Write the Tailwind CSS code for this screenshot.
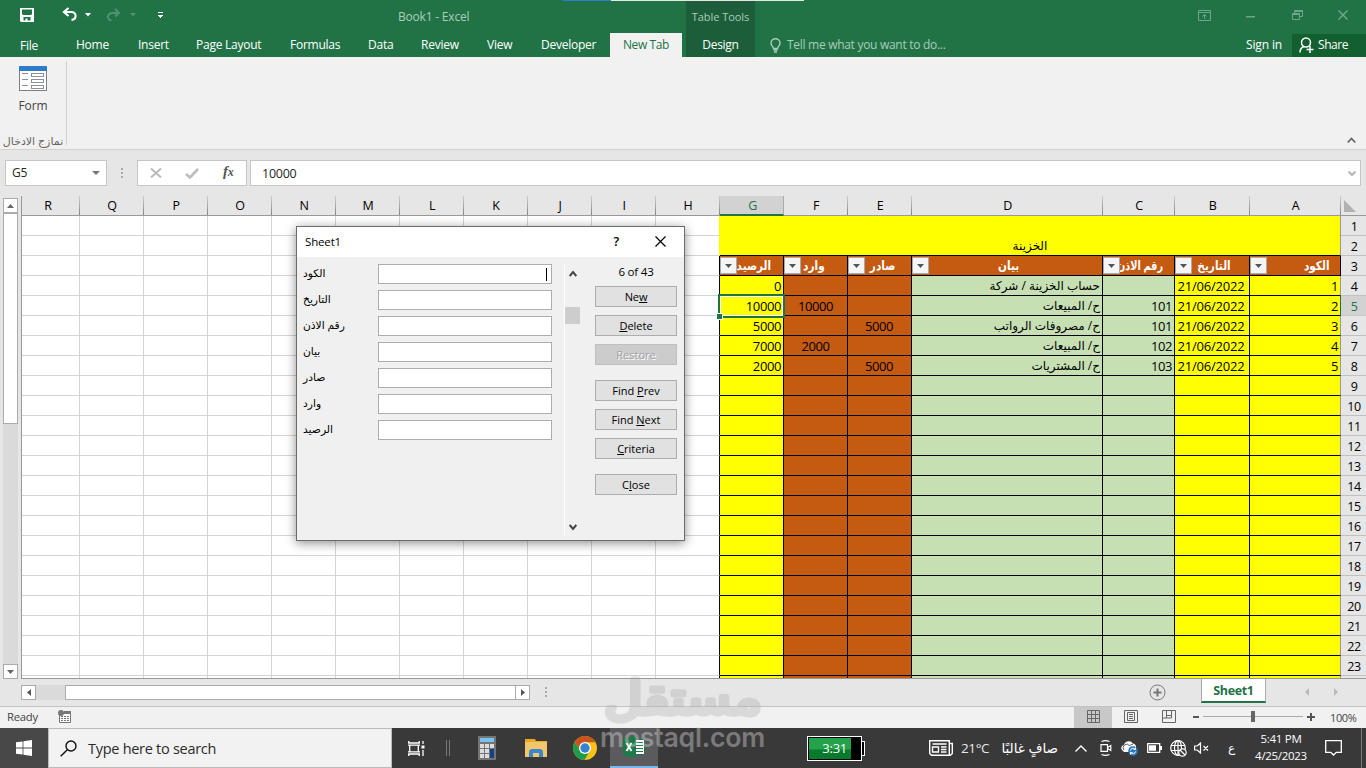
<!DOCTYPE html>
<html lang="en">
<head>
<meta charset="utf-8">
<title>Book1 - Excel</title>
<script src="https://cdn.jsdelivr.net/npm/@tailwindcss/browser@4"></script>
</head>
<body class="relative flex h-[768px] w-[1366px] flex-col overflow-hidden bg-[#e6e6e6] font-['Open_Sans','DejaVu_Sans',sans-serif] text-[12px] leading-none tracking-[-0.25px] text-[#262626]">

<!-- Title bar and tabs -->
<header class="relative h-[57px] shrink-0 bg-[#217346] text-white">
  <div class="absolute left-[563px] top-0 flex h-px w-[241px] bg-[#e6e6e6]"><i class="h-px w-[48px] bg-[#2b7cd3]"></i></div>
  <div class="flex h-[33px] items-center">
    <svg class="ml-5 h-[14px] w-[14px] -mt-[3px]" viewBox="0 0 14 14"><path fill="#fff" fill-rule="evenodd" d="M0 0H14V14H1L0 13ZM2 1.500V6L3 7H11L12 6V1.500ZM3.500 9V12.500H5.500V10.500H7.500V12.500H10.500V9Z"/></svg>
    <svg class="-mt-1 ml-7 h-[15px] w-[17px]" viewBox="0 0 17 15" fill="none" stroke="#fff" stroke-width="2.200"><path d="M6.500 1 2 5l4.500 4M2.500 5H9c6 0 6 7.500 .5 7.800"/></svg>
    <svg class="-mt-1 ml-[6px] h-[4px] w-[6px]" viewBox="0 0 6 4"><path fill="#fff" d="M0 0h6L3 3.500z"/></svg>
    <svg class="-mt-1 ml-[15px] h-[14px] w-[16px]" viewBox="0 0 16 14" fill="none" stroke="#4f9370" stroke-width="2"><path d="M9 1l4 4-4 3.500M12.500 5H7C.5 5 .5 12 5.500 12.300"/></svg>
    <svg class="-mt-1 ml-[8px] h-[4px] w-[6px]" viewBox="0 0 6 4"><path fill="#4f9370" d="M0 0h6L3 3.500z"/></svg>
    <svg class="-mt-[3px] ml-[21px] h-[7px] w-[7px]" viewBox="0 0 7 7" shape-rendering="crispEdges"><path fill="#fff" d="M1 0h5v1H1zM1 3h5v1H5v1H4v1H3V5H2V4H1z"/></svg>
    <span class="ml-[234px] pt-px text-[#a9cdb9] tracking-[-0.2px]">Book1 - Excel</span>
    <div class="ml-auto flex items-center text-[#6fa688]">
      <svg class="-mt-[3px] h-[11px] w-[13px]" viewBox="0 0 13 11" fill="none" stroke="currentColor"><path d="M.5.5h12v10H.5zM1 2.500h11M6.500 9V4.500M4.500 6.500l2-2 2 2"/></svg>
      <svg class="ml-[35px] h-[3px] w-[9px]" viewBox="0 0 9 3"><path d="M0 1h9v1.500H0z" fill="currentColor"/></svg>
      <svg class="-mt-[3px] ml-[37px] h-[10px] w-[11px]" viewBox="0 0 11 10" fill="none" stroke="currentColor"><path d="M.5 3.500h7v6h-7zM.5 4.500h7M2.500 3V.5h8v6H8M2.500 1.500h8"/></svg>
      <svg class="-mt-[3px] ml-[35px] mr-[18px] h-[10px] w-[10px]" viewBox="0 0 10 10" stroke="currentColor" stroke-width="1.500"><path d="M.5.5l9 9M9.500.5l-9 9"/></svg>
    </div>
  </div>
  <div class="absolute left-[686px] top-px flex h-[56px] w-[69px] flex-col items-center whitespace-nowrap bg-[#1b5e39]">
    <span class="mt-[10px] text-[11px] tracking-[-0.05px] text-[#a9cdb9]">Table Tools</span>
    <span class="mt-[17px] tracking-[-0.3px]">Design</span>
  </div>
  <nav class="flex h-[24px] items-center">
    <span class="w-[56px] pl-5 pt-px">File</span>
    <span class="ml-5 w-[62px]">Home</span><span class="w-[58px]">Insert</span><span class="w-[94px]">Page Layout</span><span class="w-[78px]">Formulas</span><span class="w-[53px]">Data</span><span class="w-[66px]">Review</span><span class="w-[54px]">View</span><span class="w-[69px]">Developer</span>
    <span class="flex h-[24px] w-[72px] items-center justify-center bg-[#f1f1f1] text-[#217346] tracking-[-0.4px]">New Tab</span>
    <svg class="ml-[88px] h-[15px] w-[11px]" viewBox="0 0 11 15" fill="none" stroke="#a9cdb9" stroke-width="1.400"><path d="M3.500 10.500c0-2-2.500-2.500-2.500-5.500a4.500 4.300 0 0 1 9 0c0 3-2.500 3.500-2.500 5.500zM3.500 12h4M4 14h3"/></svg>
    <span class="ml-[6px] tracking-[-0.29px] text-[#a9cdb9]">Tell me what you want to do...</span>
    <span class="ml-auto mr-[10px] tracking-[-0.15px]">Sign in</span>
    <span class="flex h-[23px] w-[74px] items-center bg-[#12602f] tracking-[-0.45px]">
      <svg class="ml-[7px] mr-1 h-[16px] w-[15px]" viewBox="0 0 15 16" fill="none" stroke="#fff" stroke-width="1.500"><circle cx="7" cy="5.500" r="4.500"/><path d="M1 15.500c0-4 2-5.500 4.500-6M11 9v7M7.500 12.500h7"/></svg>Share</span>
  </nav>
</header>

<!-- Ribbon -->
<section class="flex h-[93px] shrink-0 border-b border-[#d2d2d2] bg-[#f1f1f1]">
  <div class="mt-1 flex h-[84px] w-[67px] flex-col items-center border-r border-[#d2d2d2]">
    <svg class="mt-[5px] h-[25px] w-[28px] shrink-0" viewBox="0 0 28 25" shape-rendering="crispEdges"><path fill="#fff" stroke="#7f7f7f" d="M.5.5h27v24H.5z"/><path fill="#2e7bcb" d="M0 0h28v5H0z"/><path stroke="#8a8f98" fill="none" d="M3 7.500h6M3 13.500h6M3 19.500h6M12.500 7.500h12v3h-12zM12.500 13.500h12v3h-12zM12.500 19.500h12v3h-12z"/></svg>
    <span class="mt-[9px] text-[12px] tracking-[-0.1px] text-[#444]">Form</span>
    <span dir="rtl" class="mt-[23px] whitespace-nowrap text-[11px] tracking-normal text-[#666]">نمازج الادخال</span>
  </div>
  <svg class="ml-auto mr-[10px] mt-[80px] h-[7px] w-[9px]" viewBox="0 0 9 7" fill="none" stroke="#666" stroke-width="1.800"><path d="M.7 5.500l3.800-4 3.800 4"/></svg>
</section>

<!-- Formula bar -->
<section class="flex h-[46px] shrink-0 pl-[5px] pt-[10px] text-[12px]">
  <div class="flex h-[26px] w-[102px] items-center justify-between border border-[#c6c6c6] bg-white pl-[6px] pr-[6px]">G5<svg class="-mt-px h-[4px] w-[8px]" viewBox="0 0 8 4"><path fill="#777" d="M0 0h8L4 4z"/></svg></div>
  <div class="ml-[14px] mt-2 flex flex-col gap-[2px]"><i class="size-[2px] bg-[#aaa]"></i><i class="size-[2px] bg-[#aaa]"></i><i class="size-[2px] bg-[#aaa]"></i></div>
  <div class="ml-[14px] flex h-[26px] w-[110px] items-center border border-[#c6c6c6] bg-white">
    <svg class="ml-[12px] h-[10px] w-[12px]" viewBox="0 0 12 10" stroke="#bcbcbc" stroke-width="2"><path d="M1 .5l10 9M11 .5l-10 9"/></svg>
    <svg class="ml-[23px] h-[11px] w-[14px]" viewBox="0 0 14 11" fill="none" stroke="#bcbcbc" stroke-width="2.600"><path d="M1 6l4 3.500L13 1"/></svg>
    <span class="-mt-1 ml-[24px] font-['Liberation_Serif',serif] text-[15px] font-bold italic text-[#555]">f<span class="text-[12px]">x</span></span>
  </div>
  <div class="ml-[3px] flex h-[26px] w-[1111px] items-center justify-between border border-[#c6c6c6] bg-white pl-[11px] pr-[4px] pt-[2px] text-[12.500px]">10000<svg class="-mt-[2px] h-[5px] w-[8px]" viewBox="0 0 8 5" fill="none" stroke="#b5b5b5" stroke-width="2"><path d="M.5.5L4 4 7.500.5"/></svg></div>
</section>

<!-- Worksheet -->
<section class="flex h-[483px] shrink-0">
  <div class="flex w-[22px] flex-col border-r border-[#999] pl-[3px] pt-[2px]">
    <div class="flex h-[15px] w-[15px] items-center justify-center border border-[#ababab] bg-white"><svg class="h-1 w-[7px]" viewBox="0 0 7 4"><path fill="#666" d="M0 4h7L3.500 0z"/></svg></div>
    <div class="h-[211px] w-[15px] border border-[#ababab] bg-white"></div>
    <div class="h-[240px] w-[15px] bg-[#dadada]"></div>
    <div class="flex h-[15px] w-[15px] items-center justify-center border border-[#ababab] bg-white"><svg class="h-1 w-[7px]" viewBox="0 0 7 4"><path fill="#666" d="M0 0h7L3.500 4z"/></svg></div>
  </div>
  <div id="sheet" class="relative grid h-[483px] w-[1344px] auto-rows-[20px] grid-cols-[58px_repeat(13,64px)_191px_72px_75px_91px_25px] overflow-hidden border-b border-[#999] bg-white text-[13px] tracking-[-0.4px]"></div>
</section>

<!-- Sheet tabs and horizontal scroll -->
<section class="flex h-[27px] shrink-0 pl-[21px]">
  <div class="mt-[6px] flex h-[15px] w-[509px] bg-[#dadada]">
    <div class="flex w-[15px] items-center justify-center border border-[#ababab] bg-white"><svg class="h-[7px] w-1" viewBox="0 0 4 7"><path fill="#555" d="M4 0v7L0 3.500z"/></svg></div>
    <div class="ml-[29px] w-[451px] border border-[#ababab] bg-white"></div>
    <div class="flex w-[14px] items-center justify-center border border-l-0 border-[#ababab] bg-white"><svg class="h-[7px] w-1" viewBox="0 0 4 7"><path fill="#555" d="M0 0v7L4 3.500z"/></svg></div>
  </div>
  <div class="ml-[15px] mt-2 flex flex-col gap-[2px]"><i class="size-[2px] bg-[#aaa]"></i><i class="size-[2px] bg-[#aaa]"></i><i class="size-[2px] bg-[#aaa]"></i></div>
  <svg class="ml-auto mr-[35px] mt-[5px] h-[17px] w-[17px]" viewBox="0 0 17 17" fill="none" stroke="#777"><circle cx="8.500" cy="8.500" r="7.500"/><path stroke-width="2" d="M4.500 8.500h8M8.500 4.500v8"/></svg>
  <div class="-mt-px flex h-[25px] w-[65px] items-center justify-center border-x border-b-2 border-x-[#ababab] border-b-[#217346] bg-white pt-[4px] text-[12.500px] font-bold text-[#217346] tracking-[-0.35px]">Sheet1</div>
  <svg class="ml-[39px] mt-[9px] h-2 w-1" viewBox="0 0 4 8"><path fill="#bbb" d="M4 0v8L0 4z"/></svg>
  <svg class="ml-[25px] mr-[28px] mt-[9px] h-2 w-1" viewBox="0 0 4 8"><path fill="#bbb" d="M0 0v8L4 4z"/></svg>
</section>

<!-- Status bar -->
<section class="flex h-[22px] shrink-0 items-center border-t border-[#c3c3c3] bg-[#f1f1f1] pl-[7px] text-[11.300px] text-[#444]">
  <span class="w-[51px] -mt-px">Ready</span>
  <svg class="-mt-[2px] h-[13px] w-[13px]" viewBox="0 0 13 13"><path fill="#fff" stroke="#777" d="M2 2.500h10.500v10H1.500V3"/><path fill="#777" d="M6 1h7v3H6z"/><circle cx="3" cy="3" r="3" fill="#777"/><path stroke="#777" stroke-dasharray="2 1" d="M3 6.500h8M3 8.500h8M3 10.500h8"/></svg>
  <div class="ml-auto flex h-full w-[38px] items-center justify-center bg-[#c8c8c8]"><svg class="-mt-[2px] h-[13px] w-[13px]" viewBox="0 0 13 13" fill="none" stroke="#666"><path d="M.5.5h12v12H.5zM.5 4.500h12M.5 8.500h12M4.500.5v12M8.500.5v12"/></svg></div>
  <svg class="-mt-[2px] ml-[12px] h-[13px] w-[14px]" viewBox="0 0 14 13" fill="none" stroke="#666"><path d="M.5.5h13v12H.5zM3.500 2.500h7v8h-7zM5 4.500h4M5 6.500h4M5 8.500h4"/></svg>
  <svg class="-mt-[2px] ml-[24px] h-[13px] w-[14px]" viewBox="0 0 14 13" fill="none" stroke="#666"><path d="M.5.5h13v12H.5zM4.500.5v7.500h5V.5M4.500 8H.5M9.500.5v5h-5"/></svg>
  <i class="-mt-px ml-[17px] h-[2px] w-[6px] bg-[#555]"></i>
  <div class="-mt-[2px] ml-1 flex h-px w-[100px] items-center bg-[#aaa]"><i class="ml-[48px] h-[11px] w-1 shrink-0 bg-[#666]"></i></div>
  <svg class="-mt-px ml-1 h-2 w-2" viewBox="0 0 8 8"><path stroke="#555" stroke-width="2" d="M0 4h8M4 0v8"/></svg>
  <span class="-mt-px ml-[15px] w-[36px] whitespace-nowrap text-[11px] tracking-[-0.4px]">100%</span>
</section>

<!-- Taskbar -->
<footer class="flex h-[40px] shrink-0 items-center bg-[#393939] text-white">
  <div class="flex h-full w-[48px] items-center justify-center bg-[#484848]"><svg class="h-[16px] w-[16px]" viewBox="0 0 16 16" fill="#fff"><path d="M0 2.300L6.600 1.400v6.200H0zM7.400 1.200L16 0v7.600H7.400zM0 8.400h6.600v6.200L0 13.700zM7.400 8.400H16V16l-8.600-1.200z"/></svg></div>
  <div class="flex h-full w-[344px] items-center border border-[#bbb] bg-[#f2f2f2] pt-[2px] text-[14.500px] tracking-[-0.28px] text-[#2b2b2b]">
    <svg class="-mt-[2px] ml-[11px] mr-[11px] h-[17px] w-[17px]" viewBox="0 0 17 17" fill="none" stroke="#111" stroke-width="1.400"><circle cx="11" cy="6" r="5"/><path d="M7.300 9.700L.7 16.300"/></svg>Type here to search
  </div>
  <svg class="ml-[16px] h-[15px] w-[17px]" viewBox="0 0 17 15" fill="none" stroke="#fff" stroke-width="1.300"><path d="M.7 0v2h10.600V0M.7 15v-2h10.600v2M1.700 4.200h8.600v6.600H1.700zM0 4.200h12M0 10.800h12M15 0v3M15 9v6"/><path fill="#fff" stroke="none" d="M13.500 4.500h3v3h-3z"/></svg>
  <div class="ml-[21px] flex gap-[2px]"><i class="h-4 w-px bg-[#777]"></i><i class="h-4 w-px bg-[#777]"></i></div>
  <svg class="ml-[28px] h-[24px] w-[18px]" viewBox="0 0 18 24"><path fill="#747474" d="M0 0h18v24H0z"/><path fill="#76c3f0" d="M2 2h14v4H2z"/><path fill="#ddd" d="M2 8h4v4H2zM7 8h4v4H7zM12 8h4v4h-4zM2 13h4v4H2zM7 13h4v4H7zM2 18h4v4H2zM7 18h4v4H7z"/><path fill="#12418b" d="M12 13h4v9h-4z"/></svg>
  <svg class="ml-[29px] h-[18px] w-[22px]" viewBox="0 0 22 18"><path fill="#eda91c" d="M0 0h10l1 2h11v4H0z"/><path fill="#f1c66d" d="M0 3h22v15H0z"/><path fill="#3b86cf" d="M4 18v-6l2-2h10l2 2v6h-4v-4H8v4z"/></svg>
  <svg class="ml-[26px] h-[24px] w-[24px]" viewBox="0 0 24 24"><circle cx="12" cy="12" r="12" fill="#fbc116"/><path fill="#c9531c" d="M1.600 6A12 12 0 0 1 22.400 6.200H12L7 14.500z"/><path fill="#1f9c4b" d="M1.600 6A12 12 0 0 0 11.500 24l5-8.800L7 14.500z"/><circle cx="12" cy="12" r="6" fill="#fff"/><circle cx="12" cy="12" r="4.700" fill="#3683d3"/></svg>
  <div class="ml-[13px] flex h-full w-[48px] items-center justify-center border-b-2 border-[#76b9ed] bg-[#5b5b5e]">
    <svg class="h-[22px] w-[22px]" viewBox="0 0 22 22"><path fill="#fff" stroke="#1e7a48" d="M11 3.500h10.500v15H11z"/><path stroke="#1e7a48" d="M12 6.500h8M12 9.500h8M12 12.500h8M12 15.500h8"/><path fill="#1e7a48" d="M0 2.500L13 0v22L0 19.500z"/><path stroke="#fff" stroke-width="2" d="M3.500 7l5 8M8.500 7l-5 8"/></svg>
  </div>
  <div class="ml-[149px] flex items-center">
    <div class="flex h-[25px] w-[55px] border border-white bg-black p-px"><span class="flex h-full w-[42px] items-center justify-end bg-linear-to-b from-[#25a24c] from-50% to-[#087a2b] to-60% pr-1 text-[13px]">3:31</span></div>
    <i class="h-[15px] w-[3px] border border-l-0 border-white bg-black"></i>
  </div>
  <svg class="ml-[64px] h-[16px] w-[24px]" viewBox="0 0 24 16" fill="none" stroke="#fff" stroke-width="1.400"><path d="M.7.7h19.600v14.600H2.500L.7 13.500zM20.300 3.500h3v10l-2 1.800h-3M3.500 4h14M3.500 7h6v5h-6zM12 7h5.500M12 9.500h5.500M12 12h5.500"/></svg>
  <span class="ml-[8px] w-[29px] pt-[2px] text-[13.500px] tracking-[-0.4px] text-[#e8e8e8]">21°C</span>
  <span dir="rtl" class="ml-[9px] w-[59px] whitespace-nowrap pt-px text-[13.500px] tracking-normal">صافٍ غالبًا</span>
  <svg class="ml-[17px] h-[7px] w-[12px]" viewBox="0 0 12 7" fill="none" stroke="#fff" stroke-width="1.400"><path d="M.5 6.500L6 1l5.500 5.500"/></svg>
  <svg class="ml-[13px] h-[16px] w-[12px]" viewBox="0 0 12 16" fill="none" stroke="#fff" stroke-width="1.200"><path d="M1 4.600h6.500v6.800H1zM8 7.200l2.800-1.700v5L8 8.800M1.500 1.500q4-1.600 8 0M1.500 14.500q4 1.600 8 0"/></svg>
  <svg class="ml-[9px] h-[15px] w-[17px]" viewBox="0 0 17 15"><path fill="#fff" d="M1 9a3 3 0 0 1 2-5 5 5 0 0 1 9-1.500A4 4 0 0 1 15 7L9 11H3z"/><path fill="none" stroke="#393939" stroke-width=".8" d="M3 9a3.500 3.500 0 0 1 5.500-4.500L12 3"/><circle cx="12" cy="10" r="4.800" fill="#2a78bd"/><path fill="none" stroke="#fff" d="M9.500 9.500a2.500 2.500 0 0 1 4.500-1.200M14.500 10.500A2.500 2.500 0 0 1 10 11.700M14.500 6.500v2H12.500M9.500 13.500v-2H11.500"/></svg>
  <svg class="ml-[9px] h-[10px] w-[15px]" viewBox="0 0 15 10"><path fill="none" stroke="#fff" stroke-width="1.300" d="M.7.7h12v8.600h-12z"/><path fill="#fff" d="M2 2.300h7v5.400H2zM13 3h2v4h-2z"/></svg>
  <svg class="ml-[8px] h-[17px] w-[17px]" viewBox="0 0 17 17" fill="none" stroke="#fff" stroke-width="1.200"><circle cx="8" cy="8" r="7.300"/><ellipse cx="8" cy="8" rx="3.500" ry="7.300"/><path d="M1 5.500h14M1 10.500h9M8 .7V15"/><circle cx="12.500" cy="12.500" r="3.700" fill="#393939"/><path d="M10 10l5 5"/></svg>
  <svg class="ml-[7px] h-[12px] w-[15px]" viewBox="0 0 15 12" fill="none" stroke="#fff" stroke-width="1.200"><path d="M.6 4h2.600l3.300-3v10L3.200 8H.6zM9.500 4l4.500 4.500M14 4L9.500 8.500"/></svg>
  <span class="ml-[19px] w-2 text-[12px]">ع</span>
  <div class="ml-[16px] flex w-[58px] flex-col items-center gap-[6px] whitespace-nowrap pb-[2px] text-[11.500px]"><span class="tracking-[-0.25px]">5:41 PM</span><span class="tracking-[-0.3px]">4/25/2023</span></div>
  <svg class="ml-auto mr-[19px] h-[16px] w-[17px]" viewBox="0 0 17 16" fill="none" stroke="#fff" stroke-width="1.300"><path d="M.7.7h15.600v11.600h-5L8.500 15l-2.800-2.700h-5z"/></svg>
  <i class="mr-1 h-full w-px bg-[#777]"></i>
</footer>

<!-- Data form dialog -->
<div class="absolute left-[296px] top-[226px] flex h-[315px] w-[389px] flex-col border border-[#6b6b6b] bg-[#f0f0f0] text-[11px] tracking-[0] text-black shadow-[0_2px_10px_rgba(0,0,0,0.45)]">
  <div class="flex h-[30px] shrink-0 items-center bg-white pl-2 text-[11.500px] tracking-[-0.15px]">Sheet1
    <span class="ml-auto mr-[36px] text-[12.500px] font-semibold">?</span>
    <svg class="-mt-[2px] mr-[18px] h-[11px] w-[11px]" viewBox="0 0 11 11" stroke="#000" stroke-width="1.200"><path d="M.5.5l10 10M10.500.5l-10 10"/></svg>
  </div>
  <div class="flex grow">
    <div id="fields" class="flex w-[262px] flex-col gap-[6px] pl-[6px] pt-[7px]"></div>
    <div class="ml-[5px] mt-[8px] flex h-[270px] w-[17px] flex-col items-center border-l border-white pr-px">
      <svg class="mt-[5px] h-[7px] w-[8px]" viewBox="0 0 8 7" fill="none" stroke="#444" stroke-width="2"><path d="M.7 6L4 2l3.300 4"/></svg>
      <i class="mt-[30px] h-[17px] w-[15px] bg-[#cdcdcd]"></i>
      <svg class="mb-[4px] mt-auto h-[7px] w-[8px]" viewBox="0 0 8 7" fill="none" stroke="#444" stroke-width="2"><path d="M.7 1L4 5l3.300-4"/></svg>
    </div>
    <div class="ml-[14px] flex w-[82px] flex-col items-stretch gap-2 pt-[9px]">
      <span class="mb-px h-[11px] text-center text-[11.500px] tracking-[-0.2px]">6 of 43</span>
      <button class="h-[21px] border border-[#adadad] bg-[#e1e1e1] tracking-[-0.1px]">Ne<u>w</u></button>
      <button class="h-[21px] border border-[#adadad] bg-[#e1e1e1]"><u>D</u>elete</button>
      <button class="h-[21px] border border-[#bfbfbf] bg-[#cccccc] text-[#a3a3a3] [text-shadow:1px_1px_0_#fff]">Restore</button>
      <button class="mt-[7px] h-[21px] border border-[#adadad] bg-[#e1e1e1]">Find <u>P</u>rev</button>
      <button class="h-[21px] border border-[#adadad] bg-[#e1e1e1]">Find <u>N</u>ext</button>
      <button class="h-[21px] border border-[#adadad] bg-[#e1e1e1]"><u>C</u>riteria</button>
      <button class="mt-[7px] h-[21px] border border-[#adadad] bg-[#e1e1e1]">C<u>l</u>ose</button>
    </div>
  </div>
</div>

<!-- Watermark -->
<svg class="absolute left-[586px] top-[664px] h-[104px] w-[195px]" viewBox="-10 0 195 104">
  <text x="166" y="50" direction="rtl" font-family="DejaVu Sans" font-size="46" textLength="158" lengthAdjust="spacingAndGlyphs" fill="#a8a8a8" stroke="#a8a8a8" stroke-width="5" stroke-linejoin="round" opacity=".32">مستقل</text>
  <text x="4" y="83" font-family="Inter" font-weight="600" font-size="27" textLength="165" lengthAdjust="spacingAndGlyphs" fill="#d5d5d5" opacity=".42">mostaql.com</text>
</svg>

<script>
const sheet = document.getElementById('sheet');
const add = (cls, html = '') => {
  const d = document.createElement('div');
  d.className = cls;
  d.innerHTML = html;
  sheet.appendChild(d);
};

// Column headings
for (const c of 'RQPONMLKJIHGFEDCBA') {
  if (c === 'G') {
    add('flex items-center justify-center border-r border-b-2 border-r-[#ababab] border-b-[#217346] bg-[#d2d2d2] pl-[2px] pt-[2px] text-[#217346] text-[12.500px]', c);
  } else {
    add('relative flex items-center justify-center border-b border-[#999] bg-[#e6e6e6] pt-[2px] text-[12.500px] text-black after:absolute after:right-0 after:top-0 after:h-[19px] after:w-px after:bg-linear-to-b after:from-[#ccc] after:to-[#888]' + (c === 'R' ? ' pr-[6px]' : ''), c);
  }
}
add('border-b border-[#999] bg-[#e6e6e6] pl-[3px] pt-[4px]', '<svg class="h-[12px] w-[12px]" viewBox="0 0 12 12"><path fill="#b1b1b1" d="M0 0v12h12z"/></svg>');

const titles = { G: 'الرصيد', F: 'وارد', E: 'صادر', D: 'بيان', C: 'رقم الاذن', B: 'التاريخ', A: 'الكود' };
const data = {
  4: { G: '0', D: 'حساب الخزينة / شركة', B: '21/06/2022', A: '1' },
  5: { G: '10000', F: '10000', D: 'ح/ المبيعات', C: '101', B: '21/06/2022', A: '2' },
  6: { G: '5000', E: '5000', D: 'ح/ مصروفات الرواتب', C: '101', B: '21/06/2022', A: '3' },
  7: { G: '7000', F: '2000', D: 'ح/ المبيعات', C: '102', B: '21/06/2022', A: '4' },
  8: { G: '2000', E: '5000', D: 'ح/ المشتريات', C: '103', B: '21/06/2022', A: '5' }
};
const style = {
  G: 'flex items-center justify-end border-r border-b border-black bg-[#ffff00] pr-[2px] pt-[2px] text-black',
  F: 'flex items-center justify-center border-r border-b border-black bg-[#c55a11] pt-[2px] text-black',
  E: 'flex items-center justify-center border-r border-b border-black bg-[#c55a11] pt-[2px] pr-px text-black',
  D: 'flex items-center justify-end border-r border-b border-black bg-[#c6e0b4] pr-[2px] pt-px text-[12px] tracking-normal text-black',
  C: 'flex items-center justify-end border-r border-b border-black bg-[#c6e0b4] pr-[2px] pt-[2px] text-black',
  B: 'flex items-center justify-center border-r border-b border-black bg-[#ffff00] pt-[2px] pr-[2px] text-black tracking-[-0.22px]',
  A: 'flex items-center justify-end border-r border-b border-b-black border-r-[#999] bg-[#ffff00] pr-[2px] pt-[2px] text-black'
};
const headPos = {
  G: 'pr-[12px] justify-end', F: 'pr-[22px] justify-end', E: 'pr-[16px] justify-end', D: 'justify-center',
  C: 'pr-[11px] justify-end', B: 'pr-[18px] justify-end', A: 'pr-[11px] justify-end'
};
for (let r = 1; r <= 24; r++) {
  for (const c of 'RQPONMLKJI') add('border-r border-b border-[#d4d4d4] bg-white');
  add(r < 3
    ? 'border-r border-b border-b-[#d4d4d4] border-r-[#ffff00] bg-white'
    : 'border-r border-b border-b-[#d4d4d4] border-r-black bg-white');
  if (r === 1) {
    add('col-span-7 row-span-2 flex items-end justify-center border-b border-r border-b-black border-r-[#999] bg-[#ffff00] pb-[3px] text-[12px] tracking-normal text-black', 'الخزينة');
  } else if (r === 3) {
    for (const c of 'GFEDCBA') {
      add('relative flex items-center overflow-hidden whitespace-nowrap border-r border-b border-black bg-[#c55a11] pt-px text-[12.500px] font-bold tracking-normal text-white ' + headPos[c],
        '<span class="' + (c === 'C' ? 'origin-right scale-x-[0.78]' : 'origin-right scale-x-[0.84]') + '">' + titles[c] + '</span><span class="absolute left-0 top-px flex h-[17px] w-[17px] items-center justify-center border border-[#a9a9b0] bg-[#f5f5f5]"><svg class="h-1 w-[7px]" viewBox="0 0 7 4"><path fill="#555" d="M0 0h7L3.500 4z"/></svg></span>');
    }
  } else if (r > 3) {
    for (const c of 'GFEDCBA') {
      const v = (data[r] || {})[c] || '';
      add(style[c], c === 'D' ? '<span dir="rtl" class="whitespace-nowrap">' + v + '</span>' : v);
    }
  }
  add(r === 5
    ? 'flex items-center justify-center border-b border-[#c8c8c8] bg-[#d2d2d2] pl-px pt-[3px] text-[12.500px] text-[#217346] shadow-[-1px_0_0_#217346]'
    : 'flex items-center justify-center border-b border-[#c0c0c0] bg-[#e6e6e6] pl-px pt-[3px] text-[12.500px] text-black', r < 24 ? r : '');
}

// Active cell outline and fill handle
add('absolute left-[696px] top-[98px] h-[24px] w-[67px] border-2 border-[#217346] outline-1 -outline-offset-3 outline-white');
add('absolute left-[694px] top-[117px] size-[7px] border border-white bg-[#217346]');

// Form fields
document.getElementById('fields').innerHTML =
  ['الكود', 'التاريخ', 'رقم الاذن', 'بيان', 'صادر', 'وارد', 'الرصيد'].map((t, i) =>
    '<div class="flex h-[20px] items-center"><span class="-mt-px w-[75px] whitespace-nowrap text-[10.700px] tracking-normal">' + t +
    '</span><span class="flex h-[20px] w-[174px] items-center justify-end border border-[#abadb3] bg-white pr-1">' +
    (i === 0 ? '<i class="h-[13px] w-px bg-black"></i>' : '') + '</span></div>').join('');
</script>
</body>
</html>
